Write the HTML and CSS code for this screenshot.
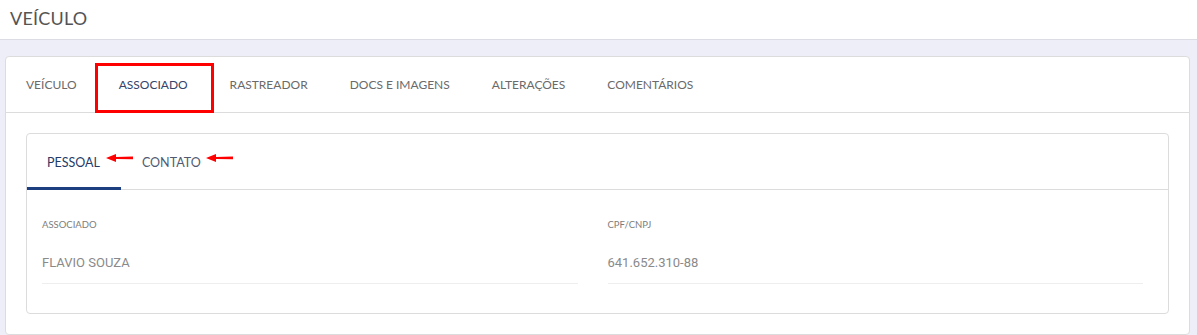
FILE: index.html
```html
<!DOCTYPE html>
<html lang="pt">
<head>
<meta charset="utf-8">
<title>Veículo</title>
<link rel="stylesheet" href="styles.css">
</head>
<body>
<header class="page-header"><h1 class="page-title">VEÍCULO</h1></header>
<main class="page-main">
  <section class="card">
    <nav class="tabs">
      <a class="tab">VEÍCULO</a>
      <a class="tab tab-active tab-marked">ASSOCIADO</a>
      <a class="tab">RASTREADOR</a>
      <a class="tab">DOCS E IMAGENS</a>
      <a class="tab">ALTERAÇÕES</a>
      <a class="tab">COMENTÁRIOS</a>
    </nav>
    <div class="card-body">
      <section class="inner-card">
        <nav class="subtabs">
          <a class="subtab subtab-active">PESSOAL<svg class="arrow" width="27" height="8" viewBox="0 0 27 8"><polygon points="0,4 10,0 10,3 27,2.6 27,5.2 10,5 10,8" fill="#ff0000"/></svg></a>
          <a class="subtab">CONTATO<svg class="arrow" width="27" height="8" viewBox="0 0 27 8"><polygon points="0,4 10,0 10,3 27,2.6 27,5.2 10,5 10,8" fill="#ff0000"/></svg></a>
        </nav>
        <div class="fields">
          <div class="field">
            <div class="field-label">ASSOCIADO</div>
            <div class="field-value">FLAVIO SOUZA</div>
          </div>
          <div class="field">
            <div class="field-label">CPF/CNPJ</div>
            <div class="field-value">641.652.310-88</div>
          </div>
        </div>
      </section>
    </div>
  </section>
</main>
</body>
</html>
```
FILE: styles.css
```css
* { box-sizing: border-box; }
html, body { margin: 0; padding: 0; }
body {
  font-family: "Lato", "Open Sans", sans-serif;
  background: #eeeef8;
  color: #555;
  height: 335px;
  overflow: hidden;
}
.page-header {
  background: #fff;
  height: 40px;
  border-bottom: 1px solid #dcdce4;
  padding: 0 10px;
  display: flex;
  align-items: center;
}
.page-title {
  margin: 0;
  font-size: 18px;
  font-weight: 400;
  color: #545454;
  letter-spacing: 0.2px;
  position: relative;
  top: -2px;
}
.page-main {
  padding: 16px 7px 0 5px;
}
.card {
  background: #fff;
  border: 1px solid #dcdcdc;
  border-radius: 4px;
}
.tabs {
  display: flex;
  height: 56px;
  border-bottom: 1px solid #dcdcdc;
}
.tab {
  position: relative;
  display: flex;
  align-items: center;
  padding: 0 21px;
  font-size: 12px;
  color: #6a6a6a;
  white-space: nowrap;
}
.tab:first-child { padding-left: 20px; }
.tab-active { color: #34446a; }
.tab-marked::after {
  content: "";
  position: absolute;
  top: 6px;
  bottom: -1px;
  left: -3px;
  right: -5px;
  border: 3px solid #ff0000;
}
.card-body {
  padding: 20px;
}
.inner-card {
  border: 1px solid #dcdcdc;
  border-radius: 4px;
  background: #fff;
}
.subtabs {
  display: flex;
  height: 56px;
  border-bottom: 1px solid #dcdcdc;
}
.subtab {
  position: relative;
  display: flex;
  align-items: center;
  padding: 0 21px 0 20px;
  font-size: 12.5px;
  color: #505b72;
  margin-bottom: -1px;
}
.subtab + .subtab { padding-left: 21px; }
.subtab-active {
  color: #243b68;
  border-bottom: 3px solid #1c3f80;
  padding-top: 3px;
}
.arrow {
  position: absolute;
  left: calc(100% - 15px);
  top: 20px;
}
.subtab + .subtab .arrow { left: calc(100% - 16px); }
.fields {
  display: grid;
  grid-template-columns: 1fr 1fr;
  column-gap: 30px;
  padding: 28px 25px 29px 15px;
}
.field-label {
  font-size: 9.5px;
  line-height: 14px;
  color: #7d7d7d;
}
.field-value {
  font-family: "Roboto", "Liberation Sans", sans-serif;
  font-size: 13px;
  line-height: 20px;
  color: #8a8a8a;
  padding: 21px 0 10px;
  border-bottom: 1px solid #eeeeee;
}
```
